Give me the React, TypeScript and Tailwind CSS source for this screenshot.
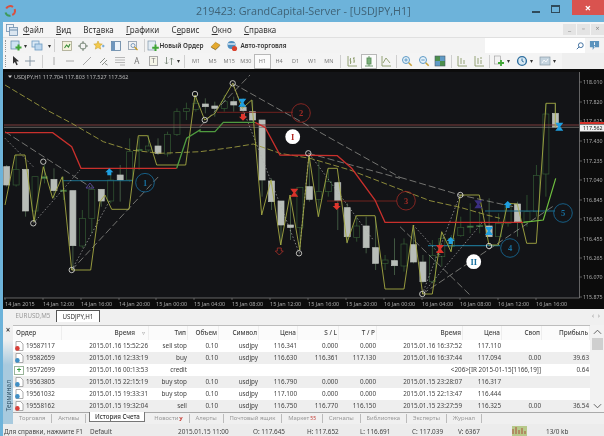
import type { ReactNode } from "react";

const FONT = "font-['Noto_Sans','Liberation_Sans',sans-serif]";

// wick top, body top, body bottom, wick bottom, white? (traced at 3x, offset y=70)
const candles: [number, number, number, number, number][] = [
  [285, 290, 345, 350, 1], [255, 298, 345, 350, 0], [298, 298, 423, 440, 1], [320, 320, 423, 455, 0],
  [285, 320, 326, 340, 2], [295, 328, 362, 385, 1], [320, 360, 365, 390, 2], [362, 362, 527, 600, 1],
  [420, 445, 528, 535, 0], [345, 358, 445, 490, 0], [358, 358, 393, 410, 1], [300, 330, 393, 400, 0],
  [285, 315, 330, 395, 1], [205, 245, 330, 335, 0], [200, 238, 242, 300, 2], [195, 228, 240, 245, 0],
  [205, 228, 250, 255, 1], [185, 193, 252, 260, 0], [115, 125, 193, 198, 0], [98, 116, 124, 150, 0],
  [75, 100, 118, 125, 0], [85, 102, 110, 130, 1], [95, 108, 115, 140, 1], [75, 95, 115, 125, 0],
  [80, 95, 105, 125, 1], [85, 112, 122, 130, 1], [90, 125, 150, 155, 1], [150, 150, 330, 380, 1],
  [325, 333, 395, 420, 1], [393, 393, 465, 525, 1], [375, 465, 472, 510, 1], [352, 352, 472, 540, 0],
  [260, 350, 388, 395, 1], [275, 365, 388, 440, 0], [295, 335, 365, 380, 0], [335, 338, 392, 480, 1],
  [400, 413, 500, 520, 1], [440, 468, 502, 515, 0], [440, 468, 533, 550, 1], [440, 533, 580, 600, 1],
  [555, 570, 580, 600, 0], [505, 572, 587, 615, 1], [505, 522, 588, 605, 0], [465, 524, 576, 580, 1],
  [555, 576, 635, 640, 1], [510, 556, 635, 640, 0], [490, 505, 560, 590, 0], [495, 505, 530, 545, 0],
  [440, 472, 497, 500, 0], [400, 468, 472, 490, 2], [425, 466, 470, 490, 2], [385, 468, 500, 500, 1],
  [430, 460, 500, 500, 0], [395, 405, 460, 470, 0], [395, 402, 455, 500, 1], [375, 425, 455, 470, 0],
  [285, 316, 425, 440, 0], [100, 132, 312, 380, 0], [98, 130, 172, 172, 1],
];

const yl = (pts: [number, number][], ox: number) =>
  pts.map(([x, y]) => `${(ox + x / 3).toFixed(1)},${(70 + y / 3).toFixed(1)}`).join(" ");

const zigzag =
  yl([[15, 405], [45, 255], [75, 255], [102, 455], [130, 290], [158, 385], [187, 320], [215, 600], [272, 600], [300, 395], [315, 375], [335, 418], [387, 418], [415, 197], [443, 197], [470, 285], [557, 285], [585, 75]], 0) +
  " " +
  yl([[14, 150], [45, 130], [98, 40], [127, 115], [155, 90], [185, 435], [213, 330], [242, 525], [270, 375], [299, 540], [327, 255], [355, 440], [384, 295], [412, 295], [441, 518], [469, 437], [525, 437], [555, 657]], 200) +
  " " +
  yl([[12, 657], [40, 465], [68, 672], [97, 672], [125, 485], [153, 545], [181, 375], [238, 375], [267, 525], [295, 525], [323, 400], [352, 402], [380, 520], [409, 520], [438, 100], [466, 100], [466, 172]], 400);

const redLine = yl([[15, 188], [158, 188], [215, 230], [243, 295], [530, 295]], 0);
const redLine2 =
  yl([[165, 157], [195, 172], [240, 255], [412, 257], [455, 295], [525, 390], [555, 457]], 200) + " " + yl([[370, 457]], 400);
const greenLine = yl([[530, 295], [560, 205], [600, 180]], 0) + " " + yl([[0, 185], [45, 185], [70, 157], [165, 157]], 200);
const greenLine2 = yl([[370, 457], [430, 450], [467, 325]], 400);
const maLine =
  yl([[15, 45], [140, 120], [215, 160], [310, 215], [390, 240], [480, 250], [600, 245]], 0) +
  " " +
  yl([[100, 232], [160, 222], [240, 250], [330, 265], [450, 300], [600, 358]], 200) +
  " " +
  yl([[90, 392], [180, 412], [260, 435], [300, 445]], 400);

const longDash: string[] = [
  yl([[15, 185], [270, 350]], 0),
  yl([[215, 600], [480, 315]], 0),
  yl([[0, 170], [150, 15]], 200),
  yl([[98, 40], [600, 322]], 200),
  yl([[325, 250], [600, 325]], 200),
  yl([[0, 322], [180, 375], [340, 410]], 400),
  yl([[67, 672], [465, 405]], 400),
  yl([[0, 470], [210, 675]], 400),
];
const dotted: string[] = [
  yl([[15, 205], [100, 290]], 0),
  yl([[100, 460], [240, 300]], 0),
  yl([[215, 600], [330, 390]], 0),
  yl([[98, 40], [298, 550], [327, 250], [520, 510]], 200),
  yl([[67, 672], [245, 460]], 400),
  yl([[67, 672], [180, 375]], 400),
  yl([[40, 465], [125, 560]], 400),
];
const markers: [number, number][] = [
  [33.3, 223.3], [43.3, 161.7], [71.7, 270], [195, 94], [204.7, 120], [232.7, 83.3],
  [308.3, 153.3], [299, 253.3], [460.3, 195], [489, 246], [422.3, 294],
];
const priceLabels: [string, number][] = [
  ["118.010", 82], ["117.820", 102], ["117.625", 121], ["117.430", 141], ["117.235", 161], ["117.040", 180],
  ["116.845", 200], ["116.650", 219], ["116.455", 239], ["116.265", 258], ["116.070", 277], ["115.875", 297],
];
const timeLabels: [string, number][] = [
  ["14 Jan 2015", 5], ["14 Jan 12:00", 43], ["14 Jan 16:00", 81], ["14 Jan 20:00", 119], ["15 Jan 00:00", 156],
  ["15 Jan 04:00", 194], ["15 Jan 08:00", 232], ["15 Jan 12:00", 270], ["15 Jan 16:00", 308], ["15 Jan 20:00", 346],
  ["16 Jan 00:00", 384], ["16 Jan 04:00", 422], ["16 Jan 08:00", 460], ["16 Jan 12:00", 498], ["16 Jan 16:00", 536],
];

function UpArrow({ x, y, c }: { x: number; y: number; c: string }) {
  return <polygon points={`${x},${y - 4} ${x + 4},${y} ${x + 2},${y} ${x + 2},${y + 3} ${x - 2},${y + 3} ${x - 2},${y} ${x - 4},${y}`} fill={c} />;
}
function DownArrow({ x, y, c, hollow }: { x: number; y: number; c: string; hollow?: boolean }) {
  return (
    <polygon
      points={`${x},${y + 4} ${x + 4},${y} ${x + 2},${y} ${x + 2},${y - 3} ${x - 2},${y - 3} ${x - 2},${y} ${x - 4},${y}`}
      fill={hollow ? "none" : c}
      stroke={hollow ? c : "none"}
      strokeWidth="0.8"
    />
  );
}
function Hourglass({ x, y, c }: { x: number; y: number; c: string }) {
  return <polygon points={`${x - 4},${y - 4} ${x + 4},${y - 4} ${x + 1},${y} ${x + 4},${y + 4} ${x - 4},${y + 4} ${x - 1},${y}`} fill={c} />;
}
function Ring({ x, y, label, c }: { x: number; y: number; label: string; c: string }) {
  return (
    <g>
      <circle cx={x} cy={y} r="9.3" fill="none" stroke={c} strokeWidth="0.8" />
      <text x={x} y={y + 3} textAnchor="middle" fontSize="8.5" fontWeight="700" fontFamily="Liberation Serif, serif" fill={c}>{label}</text>
    </g>
  );
}
function Badge({ x, y, label, c }: { x: number; y: number; label: string; c: string }) {
  return (
    <g>
      <circle cx={x} cy={y} r="7.4" fill="#fff" />
      <text x={x} y={y + 3} textAnchor="middle" fontSize="8.5" fontWeight="700" fontFamily="Liberation Serif, serif" fill={c}>{label}</text>
    </g>
  );
}

function Chart() {
  return (
    <svg viewBox="0 69 601 240" className="block h-[240px] w-[601px] shrink-0" shapeRendering="geometricPrecision">
      <rect x="0" y="69" width="601" height="240" fill="#0c0c0c" />
      <rect x="1" y="72" width="576" height="226" fill="#131417" />
      <g transform="translate(-3 0)">
        {candles.map(([wt, bt, bb, wb, white], i) => {
          const x = 6.67 + i * 9.46;
          const toY = (v: number) => 70 + v / 3;
          const stroke = white === 1 ? "#b8bdb8" : "#345a34";
          return (
            <g key={i}>
              <line x1={x} x2={x} y1={toY(wt)} y2={toY(wb)} stroke={white === 1 ? "#4d6a4d" : "#345a34"} strokeWidth="0.8" />
              <rect
                x={x - 3}
                y={toY(bt)}
                width="6"
                height={Math.max(1, (bb - bt) / 3)}
                fill={white === 1 ? "#b8bdb8" : white === 2 ? "#4f8a4f" : "#131417"}
                stroke={stroke}
                strokeWidth="0.7"
              />
            </g>
          );
        })}
        {/* price lines */}
        <line x1="4" x2="579" y1="125" y2="125" stroke="#7d3c3c" strokeWidth="1" />
        <line x1="4" x2="579" y1="127.3" y2="127.3" stroke="#77736f" strokeWidth="0.8" />
        <line x1="217" x2="293" y1="112.3" y2="112.3" stroke="#7a2420" strokeWidth="0.9" />
        <line x1="327" x2="397" y1="201" y2="201" stroke="#7a2420" strokeWidth="0.9" />
        <line x1="63" x2="133" y1="180.7" y2="180.7" stroke="#1c6f8c" strokeWidth="1" />
        <line x1="428" x2="500" y1="245.7" y2="245.7" stroke="#1c6f8c" strokeWidth="1.2" />
        <line x1="485" x2="555" y1="211" y2="211" stroke="#1c6f8c" strokeWidth="1" />
        {longDash.map((p, i) => (
          <polyline key={i} points={p} fill="none" stroke="#9c9c96" strokeWidth="0.7" strokeDasharray="7 3" />
        ))}
        {dotted.map((p, i) => (
          <polyline key={i} points={p} fill="none" stroke="#b0b0b0" strokeWidth="0.7" strokeDasharray="1.5 2" />
        ))}
        <polyline points={maLine} fill="none" stroke="#9a973e" strokeWidth="0.9" strokeDasharray="6 2.5" />
        <polyline points={zigzag} fill="none" stroke="#a5a943" strokeWidth="0.9" />
        <polyline points={redLine} fill="none" stroke="#c9302c" strokeWidth="1.3" />
        <polyline points={redLine2} fill="none" stroke="#c9302c" strokeWidth="1.3" />
        <polyline points={greenLine} fill="none" stroke="#4f9a3f" strokeWidth="1.3" />
        <polyline points={greenLine2} fill="none" stroke="#6fbf3f" strokeWidth="1.2" />
        {markers.map(([x, y], i) => (
          <circle key={i} cx={x} cy={y} r="2.7" fill="none" stroke="#e6e6e0" strokeWidth="0.8" />
        ))}
        <UpArrow x={109.3} y={172.3} c="#1f9fe0" />
        <UpArrow x={450.7} y={241} c="#1f9fe0" />
        <UpArrow x={507.7} y={205} c="#1f9fe0" />
        <DownArrow x={243} y={116.7} c="#e0352c" />
        <DownArrow x={336.7} y={206} c="#e0352c" />
        <DownArrow x={279.3} y={251} c="#a83028" hollow />
        <Hourglass x={294.3} y={192.7} c="#d8322a" />
        <Hourglass x={440} y={249} c="#d8322a" />
        <Hourglass x={242.3} y={102.7} c="#1f9fe0" />
        <Hourglass x={489} y={231} c="#1f9fe0" />
        <Hourglass x={559.3} y={126.7} c="#1f9fe0" />
        <polygon points="90,183 94,188 86,188" fill="none" stroke="#5a4a9a" strokeWidth="0.9" />
        <Hourglass x={478.3} y={204.3} c="#3a2f80" />
        <Ring x={145} y={182.7} label="1" c="#17709f" />
        <Ring x={301} y={113} label="2" c="#a02a24" />
        <Ring x={406} y={200.7} label="3" c="#a02a24" />
        <Ring x={510} y={248} label="4" c="#17709f" />
        <Ring x={563} y={213} label="5" c="#17709f" />
        <Badge x={292.7} y={136.7} label="I" c="#b32a24" />
        <Badge x={473.7} y={261.7} label="II" c="#17709f" />
        {/* axes */}
        <rect x="579.5" y="72" width="25" height="226" fill="#0c0c0c" />
        <line x1="579.5" x2="579.5" y1="72" y2="298" stroke="#8a8a8a" strokeWidth="0.7" />
        <line x1="4" x2="579.5" y1="298" y2="298" stroke="#8a8a8a" strokeWidth="0.7" />
        {priceLabels.map(([t, y]) => (
          <g key={t}>
            <line x1="579.5" x2="582" y1={y} y2={y} stroke="#8a8a8a" strokeWidth="0.6" />
            <text x="583" y={y + 2} fontSize="5.3" fill="#a9a9a9" fontFamily="Noto Sans, sans-serif">{t}</text>
          </g>
        ))}
        <rect x="580" y="122" width="24" height="2" fill="#d6322a" />
        <rect x="580" y="124.5" width="24" height="7" fill="#f2f2f2" />
        <text x="583" y="130" fontSize="5.3" fill="#222" fontFamily="Noto Sans, sans-serif">117.562</text>
        {timeLabels.map(([t, x]) => (
          <g key={t}>
            <line x1={x} x2={x} y1="298" y2="300" stroke="#8a8a8a" strokeWidth="0.6" />
            <text x={x} y="305.5" fontSize="5.5" fill="#a9a9a9" fontFamily="Noto Sans, sans-serif">{t}</text>
          </g>
        ))}
        <polygon points="8,75.5 12,75.5 10,78" fill="#d8d8d8" />
        <text x="14" y="78.5" fontSize="5.5" fill="#b8b8b8" fontFamily="Noto Sans, sans-serif">USDJPY,H1  117.704 117.803 117.527 117.562</text>
      </g>
    </svg>
  );
}

function Doc({ dot }: { dot: string }) {
  return (
    <svg viewBox="0 0 10 10" className="h-[10px] w-[10px] shrink-0">
      <path d="M2 .5h4.5L9 3v6.5H2z" fill="#fff" stroke="#777" strokeWidth=".6" />
      <circle cx="3.4" cy="7.4" r="2.3" fill={dot} />
    </svg>
  );
}

function Ico({ kind }: { kind: string }) {
  const common = "h-[12px] w-[12px]";
  switch (kind) {
    case "new":
      return (
        <svg viewBox="0 0 12 12" className={common}>
          <rect x="1" y="1" width="8" height="8" fill="#cfe3f2" stroke="#5a86a8" strokeWidth=".7" />
          <path d="M8.5 4.5v6M5.5 7.5h6" stroke="#3fa535" strokeWidth="2" />
        </svg>
      );
    case "windows":
      return (
        <svg viewBox="0 0 12 12" className={common}>
          <rect x="1" y="1" width="7" height="6" fill="#dbe9f5" stroke="#6c9ac0" strokeWidth=".8" />
          <rect x="4" y="4" width="7" height="6" fill="#bcd7ee" stroke="#6c9ac0" strokeWidth=".8" />
        </svg>
      );
    case "chartGreen":
      return (
        <svg viewBox="0 0 12 12" className={common}>
          <rect x="1.5" y="1.5" width="9" height="9" fill="#f4f2dc" stroke="#9c9c80" strokeWidth=".7" />
          <path d="M3.5 8l2-3 2 2 1.5-3" stroke="#3a8f3a" strokeWidth="1.1" fill="none" />
        </svg>
      );
    case "cross":
      return (
        <svg viewBox="0 0 12 12" className={common} fill="none" stroke="#6f7f6f" strokeWidth=".9">
          <circle cx="6" cy="6" r="3.2" />
          <path d="M6 1v3M6 8v3M1 6h3M8 6h3" />
        </svg>
      );
    case "star":
      return (
        <svg viewBox="0 0 12 12" className={common}>
          <path d="M5 1l1.3 2.8 3 .3-2.3 2 .7 3L5 7.6 2.3 9.1l.7-3L.8 4.1l3-.3z" fill="#f2c94c" stroke="#c79a20" strokeWidth=".5" />
          <path d="M9 6h2.5M10.2 4.8v2.5" stroke="#5a9ad0" strokeWidth=".9" />
        </svg>
      );
    case "panel":
      return (
        <svg viewBox="0 0 12 12" className={common}>
          <rect x="1.5" y="1.5" width="9" height="9" fill="#eef4fa" stroke="#5f7f9f" strokeWidth=".8" />
          <rect x="1.5" y="1.5" width="3.5" height="9" fill="#6f96bd" />
        </svg>
      );
    case "glassDoc":
      return (
        <svg viewBox="0 0 12 12" className={common} fill="none" stroke="#8a9aaa" strokeWidth=".8">
          <rect x="1.5" y="1.5" width="8" height="8" />
          <circle cx="6" cy="5.5" r="2" stroke="#5f87af" />
          <path d="M7.5 7l3 3" stroke="#c79a20" strokeWidth="1.2" />
        </svg>
      );
    case "order":
      return (
        <svg viewBox="0 0 12 12" className={common}>
          <rect x="1" y="1" width="7.5" height="9" fill="#e3ecf3" stroke="#7f97ab" strokeWidth=".7" />
          <path d="M8.5 4.5v6.5M5.2 7.7h6.6" stroke="#3fa535" strokeWidth="2" />
        </svg>
      );
    case "hat":
      return (
        <svg viewBox="0 0 12 12" className={common}>
          <path d="M1 7l5-5 5 3-5 5z" fill="#e5a92e" stroke="#a87a1c" strokeWidth=".6" />
          <path d="M1.5 7.5L6 10l4.5-4" stroke="#7a6a3a" strokeWidth=".7" fill="none" />
        </svg>
      );
    case "auto":
      return (
        <svg viewBox="0 0 12 12" className={common}>
          <circle cx="5.5" cy="5" r="4" fill="#4f8fc0" />
          <path d="M2 4h7" stroke="#e6f0f8" strokeWidth="1.4" />
          <circle cx="8.5" cy="8.5" r="2.6" fill="#d9432f" />
        </svg>
      );
    case "pointer":
      return (
        <svg viewBox="0 0 12 12" className={common}>
          <path d="M3 1l6 5.2-2.8.2 1.6 3.2-1.4.6-1.5-3.2L3 8.8z" fill="#333" />
        </svg>
      );
    case "plus":
      return (
        <svg viewBox="0 0 12 12" className={common} stroke="#7d8f9e" strokeWidth=".9">
          <path d="M6 1v10M1 6h10" />
        </svg>
      );
    case "vline":
      return <svg viewBox="0 0 12 12" className={common} stroke="#a0a0a0" strokeWidth=".9"><path d="M6 2v8" /></svg>;
    case "hline":
      return <svg viewBox="0 0 12 12" className={common} stroke="#a0a0a0" strokeWidth=".9"><path d="M2 6h8" /></svg>;
    case "tline":
      return <svg viewBox="0 0 12 12" className={common} stroke="#a0a0a0" strokeWidth=".9"><path d="M2 10l8-8" /></svg>;
    case "channel":
      return <svg viewBox="0 0 12 12" className={common} stroke="#8a8f8a" strokeWidth="1"><path d="M2 8l5-5M4 10l5-5M7 8.5l2.5 1.5" /></svg>;
    case "fibo":
      return <svg viewBox="0 0 12 12" className={common} stroke="#a8a8a8" strokeWidth=".8"><path d="M1 2.5h10M1 5h10M1 7.5h10M6 10h5" /></svg>;
    case "A":
      return <span className="text-[8px] leading-none text-[#777]">A</span>;
    case "T":
      return <span className="border border-[#aaa] bg-[#f5f5e8] px-[2px] text-[7px] leading-[8px] text-[#777]">T</span>;
    case "arrows":
      return <svg viewBox="0 0 12 12" className={common} stroke="#7d8a7d" strokeWidth=".9" fill="none"><path d="M3.5 2v7M2 7.5l1.5 1.5L5 7.5M8.5 10V3M7 4.5L8.5 3 10 4.5" /></svg>;
    case "bars":
      return <svg viewBox="0 0 12 12" className={common} stroke="#8a9a6a" strokeWidth=".9" fill="none"><path d="M2 1v10h9M4.5 3v6M3.5 5h1M4.5 7h1M8 2v6M7 3.5h1M8 6h1" /></svg>;
    case "candle":
      return <svg viewBox="0 0 12 12" className={common} stroke="#5b8f5b" strokeWidth=".9" fill="#79b079"><path d="M6 1v10" /><rect x="4" y="3" width="4" height="6" /><path d="M2 11h8" fill="none" /></svg>;
    case "area":
      return <svg viewBox="0 0 12 12" className={common} stroke="#8a9a6a" strokeWidth=".9" fill="none"><path d="M2 1v10h9M3 8l3-5 4 5" /></svg>;
    case "zoomIn":
    case "zoomOut":
      return (
        <svg viewBox="0 0 12 12" className={common} fill="none">
          <circle cx="5" cy="5" r="3.5" stroke="#5f9ac5" fill="#e5f1f9" />
          <path d="M7.7 7.7l3 3" stroke="#c9a23a" strokeWidth="1.6" />
          <path d={kind === "zoomIn" ? "M3.3 5h3.4M5 3.3v3.4" : "M3.3 5h3.4"} stroke="#5f9ac5" />
        </svg>
      );
    case "grid":
      return (
        <svg viewBox="0 0 12 12" className={common}>
          <rect x="1" y="1" width="5" height="5" fill="#4c8f4c" />
          <rect x="6" y="1" width="5" height="5" fill="#5f9ac5" />
          <rect x="1" y="6" width="5" height="5" fill="#5f9ac5" />
          <rect x="6" y="6" width="5" height="5" fill="#4c8f4c" />
          <rect x="1" y="1" width="10" height="10" fill="none" stroke="#4a5a6a" strokeWidth=".6" />
        </svg>
      );
    case "shift":
    case "scroll":
      return <svg viewBox="0 0 12 12" className={common} stroke="#8a9a6a" strokeWidth=".9" fill="none"><path d="M2 1v10h9M5 3v6M8 5v4" />{kind === "scroll" && <path d="M8 2v2" />}</svg>;
    case "addDoc":
      return (
        <svg viewBox="0 0 12 12" className={common}>
          <rect x="1.5" y="1" width="6" height="8" fill="#f2f2f2" stroke="#9a9a9a" strokeWidth=".6" />
          <path d="M8 5v6M5 8h6" stroke="#3fa535" strokeWidth="1.8" />
        </svg>
      );
    case "clock":
      return (
        <svg viewBox="0 0 12 12" className={common} fill="none">
          <circle cx="6" cy="6" r="4.4" stroke="#2f6f9f" strokeWidth="1.4" fill="#d8e8f3" />
          <path d="M6 3.5V6l1.8 1" stroke="#2f6f9f" />
        </svg>
      );
    case "shot":
      return (
        <svg viewBox="0 0 12 12" className={common}>
          <rect x="1" y="2" width="10" height="8" fill="#c5d4df" stroke="#8a9aa7" strokeWidth=".7" />
          <path d="M3 8l2-3 2 2 2-3" stroke="#fff" fill="none" strokeWidth=".8" />
        </svg>
      );
    default:
      return null;
  }
}

const Caret = () => <span className="flex w-[5px] shrink-0 justify-center text-[6px] leading-none text-[#333]">▾</span>;
const Sep = ({ wide }: { wide?: boolean }) => (
  <span className={`h-[13px] w-px shrink-0 bg-[#cfcfcf] ${wide ? "mx-[3px]" : "mx-[2px]"}`} />
);

function Tool({ children, on, w = 16.6 }: { children: ReactNode; on?: boolean; w?: number }) {
  return (
    <span
      style={{ width: w }}
      className={`flex h-[15px] shrink-0 items-center justify-center ${on ? "border border-[#b8b8b8] bg-[#fbfbfb]" : ""}`}
    >
      {children}
    </span>
  );
}

const Grip = () => <span className="mr-[3px] h-[12px] w-[2px] shrink-0 border-l border-dotted border-[#999]" />;

function Toolbars() {
  return (
    <>
      <div className="flex h-[16px] items-center border-t border-[#e0e0e0] bg-[#f3f3f3] pl-[2px]">
        <Grip />
        <div className="flex items-center text-[#333]">
          <Tool w={12}><Ico kind="new" /></Tool>
          <span className="w-px" />
          <Caret />
          <span className="w-[2px]" />
          <Tool w={13}><Ico kind="windows" /></Tool>
          <span className="w-[4px]" />
          <Caret />
          <Sep />
          <span className="w-[2px]" />
          <Tool w={15}><Ico kind="chartGreen" /></Tool>
          <Tool w={17}><Ico kind="cross" /></Tool>
          <Tool w={16.5}><Ico kind="star" /></Tool>
          <Tool w={17}><Ico kind="panel" /></Tool>
          <Tool w={17}><Ico kind="glassDoc" /></Tool>
          <Sep />
          <Tool w={13}><Ico kind="order" /></Tool>
          <span className="w-[50px] text-[6.4px] font-semibold whitespace-nowrap text-[#333]">Новый Ордер</span>
          <Tool w={11}><Ico kind="hat" /></Tool>
          <span className="w-[5px]" />
          <Tool w={12}><Ico kind="auto" /></Tool>
          <span className="ml-[3px] text-[6.4px] font-semibold whitespace-nowrap text-[#333]">Авто-торговля</span>
        </div>
        <div className="ml-auto flex h-[15px] w-[100px] items-center justify-end bg-white pr-[1px]">
          <svg viewBox="0 0 10 10" className="h-[8px] w-[8px]" fill="none" stroke="#3f6f9f" strokeWidth="1.2">
            <circle cx="6" cy="4" r="3" />
            <path d="M3.8 6.2L1 9" />
          </svg>
        </div>
        <span className="flex w-[19px] justify-center">
          <svg viewBox="0 0 12 12" className="h-[11px] w-[11px]">
            <path d="M1 1h10v7H6l-2 3V8H1z" fill="#5b93bd" />
            <path d="M6 2.5v3M6 6.5v.8" stroke="#fff" />
          </svg>
        </span>
      </div>
      <div className="flex h-[16px] items-center bg-[#efefef]">
        <div className="flex h-full w-[559px] items-center bg-[#f4f4f4] pl-[2px]">
          <Grip />
          <Tool w={12}><Ico kind="pointer" /></Tool>
          <Tool><Ico kind="plus" /></Tool>
          <Sep wide />
          <Tool><Ico kind="vline" /></Tool>
          <Tool><Ico kind="hline" /></Tool>
          <Tool><Ico kind="tline" /></Tool>
          <Tool><Ico kind="channel" /></Tool>
          <Tool><Ico kind="fibo" /></Tool>
          <Tool><Ico kind="A" /></Tool>
          <Tool><Ico kind="T" /></Tool>
          <Tool w={14}><Ico kind="arrows" /></Tool>
          <Caret />
          <Sep wide />
          {["M1", "M5", "M15", "M30", "H1", "H4", "D1", "W1", "MN"].map((t) => (
            <Tool key={t} on={t === "H1"}>
              <span className="text-[5.5px] text-[#7a7a7a]">{t}</span>
            </Tool>
          ))}
          <Sep wide />
          <Tool><Ico kind="bars" /></Tool>
          <Tool on><Ico kind="candle" /></Tool>
          <Tool><Ico kind="area" /></Tool>
          <Sep />
          <Tool><Ico kind="zoomIn" /></Tool>
          <Tool><Ico kind="zoomOut" /></Tool>
          <Tool><Ico kind="grid" /></Tool>
          <Sep />
          <Tool><Ico kind="shift" /></Tool>
          <Tool><Ico kind="scroll" /></Tool>
          <Sep />
          <Tool w={14}><Ico kind="addDoc" /></Tool>
          <Caret />
          <span className="w-[4px]" />
          <Tool w={14}><Ico kind="clock" /></Tool>
          <Caret />
          <span className="w-[4px]" />
          <Tool w={14}><Ico kind="shot" /></Tool>
          <Caret />
        </div>
      </div>
    </>
  );
}

const menuItems: [string, string, string][] = [
  ["", "Ф", "айл"],
  ["", "В", "ид"],
  ["Вст", "а", "вка"],
  ["", "Г", "рафики"],
  ["С", "е", "рвис"],
  ["", "О", "кно"],
  ["", "С", "правка"],
];

function MenuBar() {
  return (
    <div className="flex h-[15px] items-center bg-[#f5f5f5] pl-[3px]">
      <svg viewBox="0 0 12 12" className="h-[12px] w-[12px]">
        <rect x=".5" y=".5" width="7" height="7" fill="#eef3f8" stroke="#6f8fae" strokeWidth=".8" />
        <rect x="3.5" y="3.5" width="8" height="8" fill="#dbe6f0" stroke="#6f8fae" strokeWidth=".8" />
        <path d="M3.5 6h8" stroke="#6f8fae" />
      </svg>
      <div className="ml-[5px] flex gap-[12.3px] text-[8px] text-[#333]">
        {menuItems.map(([a, u, b]) => (
          <span key={u + b}>
            {a}
            <span className="underline">{u}</span>
            {b}
          </span>
        ))}
      </div>
      <div className="ml-auto flex items-center text-[7px] text-[#888]">
        <span className="flex h-[11px] w-[13px] items-center justify-center bg-[#e4e4e4]">_</span>
        <span className="ml-px flex h-[11px] w-[13px] items-center justify-center bg-[#e4e4e4]">▫</span>
        <span className="ml-px flex h-[11px] w-[13px] items-center justify-center bg-[#e4e4e4]">×</span>
      </div>
    </div>
  );
}

const colClass: string[] = [
  "w-[49px]", "w-[87px]", "w-[39px]", "w-[31px]", "w-[40px]", "w-[39px]",
  "w-[41px]", "w-[38px]", "w-[86px]", "w-[39px]", "w-[40px]", "w-[48px]",
];
const headers = ["Ордер", "Время", "Тип", "Объем", "Символ", "Цена", "S / L", "T / P", "Время", "Цена", "Своп", "Прибыль"];

const rows: { dot: string; cells: string[] }[] = [
  { dot: "#d8403a", cells: ["19587117", "2015.01.16 15:52:26", "sell stop", "0.10", "usdjpy", "116.341", "0.000", "0.000", "2015.01.16 16:37:52", "117.110", "", ""] },
  { dot: "#3f8fc5", cells: ["19582659", "2015.01.16 12:33:19", "buy", "0.10", "usdjpy", "116.630", "116.361", "117.130", "2015.01.16 16:37:44", "117.094", "0.00", "39.63"] },
  { dot: "", cells: ["19572699", "2015.01.16 00:13:53", "credit"] },
  { dot: "#3f8fc5", cells: ["19563805", "2015.01.15 22:15:19", "buy stop", "0.10", "usdjpy", "116.790", "0.000", "0.000", "2015.01.15 23:28:07", "116.317", "", ""] },
  { dot: "#3f8fc5", cells: ["19561032", "2015.01.15 19:33:31", "buy stop", "0.10", "usdjpy", "117.100", "0.000", "0.000", "2015.01.15 22:13:47", "116.444", "", ""] },
  { dot: "#d8403a", cells: ["19558162", "2015.01.15 19:32:04", "sell", "0.10", "usdjpy", "116.750", "116.770", "116.150", "2015.01.15 23:27:59", "116.325", "0.00", "36.54"] },
];

function HistoryTable() {
  return (
    <div className="flex min-w-0 flex-1 flex-col">
      <div className="flex h-[15px] items-center border-t border-[#bdbdbd] bg-[#fbfbfb] text-[6.4px] font-medium text-[#444]">
        {headers.map((h, i) => (
          <div
            key={i}
            className={`${colClass[i]} h-full shrink-0 border-r border-[#eeeeee] leading-[14px] whitespace-nowrap ${i === 0 ? "pl-[3px] text-left" : i === 1 ? "pr-[3px] text-right" : "pr-[1px] text-right"}`}
          >
            {h}
            {i === 1 && <span className="ml-[7px] text-[6px] text-[#999]">▿</span>}
          </div>
        ))}
      </div>
      {rows.map((r, idx) => (
        <div
          key={r.cells[0]}
          className={`flex h-[12px] items-center text-[6.3px] text-[#444] ${idx % 2 === 1 ? "bg-[#eeeeee]" : "bg-white"}`}
        >
          <div className="flex w-[49px] shrink-0 items-center gap-[2px] pl-[1px]">
            {r.dot ? (
              <Doc dot={r.dot} />
            ) : (
              <span className="flex h-[9px] w-[10px] items-center justify-center border border-[#9ab59a] bg-white text-[8px] leading-none font-bold text-[#2f9a3a]">+</span>
            )}
            <span>{r.cells[0]}</span>
          </div>
          {r.cells.slice(1, r.dot ? 12 : 3).map((c, i) => (
            <div key={i} className={`${colClass[i + 1]} shrink-0 pr-[1px] text-right whitespace-nowrap`}>
              {c}
            </div>
          ))}
          {!r.dot && (
            <>
              <div className="w-[354px] shrink-0 pr-[1px] text-right whitespace-nowrap">&lt;206&gt;[IR 2015-01-15[1166,19]]</div>
              <div className="w-[48px] shrink-0 pr-[1px] text-right">0.64</div>
            </>
          )}
        </div>
      ))}
    </div>
  );
}

function Scrollbar() {
  return (
    <div className="flex w-[14px] shrink-0 flex-col items-center bg-[#f2f2f2] text-[#555]">
      <svg viewBox="0 0 10 6" className="mt-[4px] h-[6px] w-[9px]" fill="none" stroke="#555" strokeWidth="1"><path d="M1 5l4-4 4 4" /></svg>
      <div className="mt-[3px] h-[12px] w-[11px] bg-[#cfcfcf]" />
      <svg viewBox="0 0 10 6" className="mt-auto mb-[3px] h-[6px] w-[9px]" fill="none" stroke="#555" strokeWidth="1"><path d="M1 1l4 4 4-4" /></svg>
    </div>
  );
}

function TerminalTabs() {
  const before = ["Торговля", "Активы"];
  const after = ["Новости", "Алерты", "Почтовый ящик", "Маркет", "Сигналы", "Библиотека", "Эксперты", "Журнал"];
  return (
    <div className="flex h-[12px] items-start border-t border-[#aaa] bg-[#f0f0f0] text-[5.9px] text-[#999]">
      {before.map((t) => (
        <span key={t} className="mt-px flex items-center border-r border-[#bbb] px-[6px] leading-[9px] whitespace-nowrap">
          {t}
        </span>
      ))}
      <span className="mx-[3px] -mt-px flex h-[10px] w-[56px] shrink-0 items-center justify-center border border-t-0 border-[#777] bg-white text-[6.2px] font-medium whitespace-nowrap text-[#333]">
        История Счета
      </span>
      {after.map((t) => (
        <span key={t} className="mt-px flex items-center gap-[1px] border-r border-[#bbb] px-[5.9px] leading-[9px] whitespace-nowrap">
          {t}
          {t === "Новости" && <span className="text-[6px] font-bold text-[#c43a32]">у</span>}
          {t === "Маркет" && <span className="text-[5px] text-[#c43a32]">55</span>}
        </span>
      ))}
    </div>
  );
}

function StatusBar() {
  const cells: [string, string][] = [
    ["w-[87px] pl-[1px]", "Для справки, нажмите F1"],
    ["w-[88px]", "Default"],
    ["w-[75px]", "2015.01.15 11:00"],
    ["w-[54px]", "O: 117.645"],
    ["w-[53px]", "H: 117.652"],
    ["w-[52px]", "L: 116.691"],
    ["w-[46px]", "C: 117.039"],
    ["w-[54px]", "V: 6367"],
  ];
  return (
    <div className="flex h-[10px] items-start overflow-hidden bg-[#ececec] text-[6.4px] leading-[12px] text-[#444]">
      {cells.map(([w, t]) => (
        <span key={t} className={`${w} shrink-0 whitespace-nowrap`}>
          {t}
        </span>
      ))}
      <svg viewBox="0 0 15 10" className="h-[10px] w-[15px] shrink-0">
        <rect width="15" height="10" fill="#b7c98a" />
        <path d="M1 8V3M4 8V1M7 8V4M10 8V2M13 8V5" stroke="#a8503a" />
      </svg>
      <span className="ml-[19px] shrink-0 whitespace-nowrap">13/0 kb</span>
    </div>
  );
}

export default function App() {
  return (
    <div className={`${FONT} h-[436px] w-[604px] overflow-hidden bg-[#6db3da] blur-[0.3px]`}>
      <div className="flex h-[22px] items-center bg-[#6db3da] pl-[4px]">
        <svg viewBox="0 0 12 12" className="h-[12px] w-[12px]" fill="none" strokeWidth="2">
          <path d="M2.2 3.5A4.7 4.7 0 0 1 9 2" stroke="#d9503f" />
          <path d="M10.6 4.2A4.7 4.7 0 0 1 8.3 10" stroke="#d9503f" />
          <path d="M6.5 10.7A4.7 4.7 0 0 1 1.5 7.5" stroke="#3f9a5a" />
        </svg>
        <div className="ml-[180px] font-['Open_Sans',sans-serif] text-[10.8px] whitespace-nowrap text-[#3f6276]">219423: GrandCapital-Server - [USDJPY,H1]</div>
        <span className="mt-[2px] ml-auto h-[1.5px] w-[8px] bg-[#2f4a5a]" />
        <span className="mb-[4px] ml-[11px] h-[8px] w-[9px] border border-t-[2px] border-[#2f4a5a]" />
        <span className="mb-[7px] ml-[12px] flex h-[15px] w-[32px] items-center justify-center bg-[#d9534f] text-[11px] leading-none font-bold text-white">×</span>
      </div>
      <div className="ml-[3px] flex flex-col">
        <MenuBar />
        <Toolbars />
        <Chart />
        <div className="flex h-[13px] items-end bg-[#f0f0f0] pl-[8px] text-[6.2px]">
          <span className="w-[44px] pb-[1px] text-center leading-[11px] text-[#999]">EURUSD,M5</span>
          <span className="ml-[1px] h-[12px] w-[44px] border border-b-0 border-[#555] bg-white text-center leading-[11px] text-[#333]">USDJPY,H1</span>
          <span className="mb-[3px] ml-auto text-[7px] leading-none text-[#999]">‹&nbsp;&nbsp;›</span>
          <span className="w-[4px]" />
        </div>
        <div className="h-[3px] bg-[#f0f0f0]" />
        <div className="flex h-[87px]">
          <div className="flex w-[10px] shrink-0 flex-col items-center bg-[linear-gradient(#efefef,#efefef_15px,#a8cade_40px)]">
            <span className="text-[8px] leading-[9px] font-bold text-[#444]">×</span>
            <span className="mt-auto mb-[1px] rotate-180 text-[6.5px] leading-[9px] text-[#3a5a6e] [writing-mode:vertical-rl]">Терминал</span>
          </div>
          <HistoryTable />
          <Scrollbar />
        </div>
        <div className="flex">
          <div className="w-[10px] shrink-0 bg-[#a8cade]" />
          <div className="min-w-0 flex-1">
            <TerminalTabs />
          </div>
        </div>
        <div className="h-[2px] bg-[#ececec]" />
        <StatusBar />
      </div>
    </div>
  );
}
